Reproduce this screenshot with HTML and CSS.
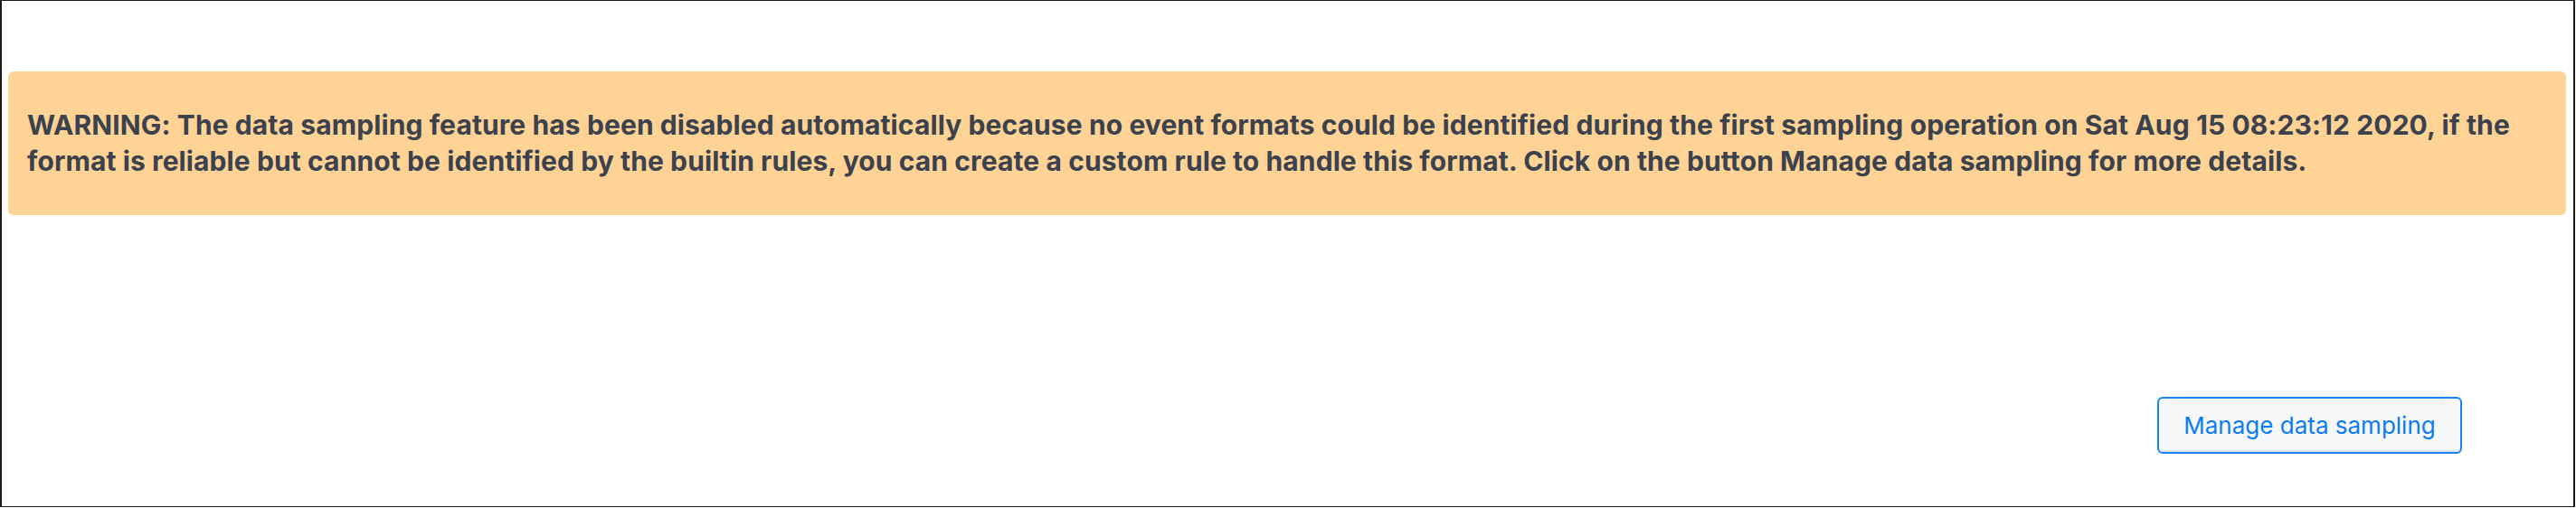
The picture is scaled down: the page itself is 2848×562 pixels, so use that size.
FILE: index.html
```html
<!DOCTYPE html>
<html lang="en">
<head>
<meta charset="utf-8">
<title>Data sampling</title>
<link rel="stylesheet" href="styles.css">
</head>
<body>
<div class="frame">
  <div class="alert">
    <p class="alert-text">WARNING: The data sampling feature has been disabled automatically because no event formats could be identified during the first sampling operation on Sat Aug 15 08:23:12 2020, if the format is reliable but cannot be identified by the builtin rules, you can create a custom rule to handle this format. Click on the button Manage data sampling for more details.</p>
  </div>
  <div class="actions">
    <button class="btn" type="button">Manage data sampling</button>
  </div>
</div>
</body>
</html>
```
FILE: styles.css
```css
html, body {
  margin: 0;
  padding: 0;
  background: #ffffff;
}

.frame {
  box-sizing: border-box;
  width: 2847px;
  height: 561px;
  border-style: solid;
  border-color: #1a1a1a;
  border-width: 1px 2px 1px 2px;
  padding-top: 78px;
  font-family: "Inter", "Liberation Sans", sans-serif;
}

.alert {
  margin: 0 8px 0 7px;
  height: 159px;
  box-sizing: border-box;
  padding: 39px 20px 0 21px;
  background: #fed395;
  border-radius: 6px;
}

.alert-text {
  margin: 0;
  font-size: 30px;
  line-height: 40px;
  font-weight: 700;
  letter-spacing: 0.1px;
  color: #3b424d;
}

.actions {
  display: flex;
  justify-content: flex-end;
  margin-top: 201px;
  padding-right: 123px;
}

.btn {
  box-sizing: border-box;
  width: 337px;
  height: 63px;
  padding: 0;
  font-family: "Inter", "Liberation Sans", sans-serif;
  font-size: 26px;
  font-weight: 400;
  color: #0b7cf3;
  background: #f5f7f9;
  border: 2px solid #1883f5;
  border-radius: 6px;
  box-shadow: inset 0 -2px 0 #e1e4e8;
}
```
